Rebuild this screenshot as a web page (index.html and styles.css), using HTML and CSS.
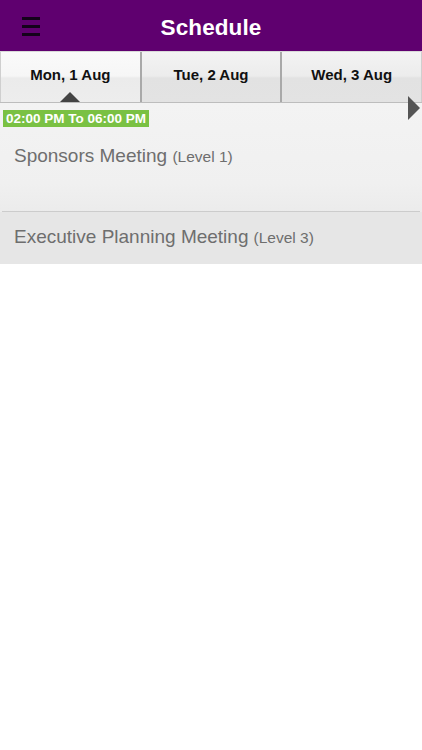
FILE: index.html
```html
<!DOCTYPE html>
<html>
<head>
<meta charset="utf-8">
<link rel="stylesheet" href="styles.css">
</head>
<body>
<header class="topbar">
  <div class="menu"><span></span><span></span><span></span></div>
  <h1 class="title">Schedule</h1>
</header>
<nav class="tabs">
  <div class="tab active">Mon, 1 Aug<i class="caret"></i></div>
  <div class="tab">Tue, 2 Aug</div>
  <div class="tab">Wed, 3 Aug</div>
</nav>
<section class="slot">
  <div class="slot-head">
    <span class="time">02:00 PM To 06:00 PM</span>
    <i class="next"></i>
  </div>
  <div class="item first">Sponsors Meeting <small>(Level 1)</small></div>
  <div class="item second">Executive Planning Meeting <small>(Level 3)</small></div>
</section>
</body>
</html>
```
FILE: styles.css
```css
html, body { margin: 0; padding: 0; background: #fff; }
body { font-family: "Liberation Sans", Arial, sans-serif; width: 422px; }
.topbar {
  height: 51px;
  background: #5f006f;
  display: flex;
  align-items: center;
  justify-content: center;
  position: relative;
  box-sizing: border-box;
  padding-top: 5px;
}
.menu {
  position: absolute;
  left: 22px;
  top: 17px;
  width: 18px;
  display: flex;
  flex-direction: column;
  gap: 5px;
}
.menu span { display: block; height: 3px; background: #14021a; }
.title {
  margin: 0;
  color: #fff;
  font-size: 22.5px;
  font-weight: bold;
  letter-spacing: 0.1px;
}
.tabs {
  display: flex;
  border-top: 1px solid #d9d9d9;
  border-bottom: 1px solid #bdbdbd;
  box-sizing: border-box;
  height: 52px;
}
.tab {
  flex: 1;
  display: flex;
  align-items: center;
  justify-content: center;
  font-size: 15px;
  font-weight: bold;
  color: #111;
  background: linear-gradient(#f3f3f3 0%, #ececec 48%, #e2e2e2 52%, #e3e3e3 100%);
  border-left: 2px solid #a9a9a9;
  position: relative;
  padding-bottom: 6px;
}
.tab:first-child { border-left: 1px solid #cfcfcf; }
.tab:last-child { border-right: 1px solid #cfcfcf; }
.tab.active {
  background: linear-gradient(#fafafa 0%, #f6f6f6 48%, #ebebeb 52%, #ededed 100%);
}
.caret {
  position: absolute;
  left: 50%;
  bottom: 0;
  margin-left: -10px;
  width: 0; height: 0;
  border-left: 10px solid transparent;
  border-right: 10px solid transparent;
  border-bottom: 10px solid #444;
}
.slot {
  background: linear-gradient(#f3f3f3 0%, #f0f0f0 50%, #e3e3e3 100%);
}
.slot-head {
  position: relative;
  padding: 6px 0 0 3px;
  height: 20px;
}
.time {
  display: inline-block;
  background: #7ac143;
  color: #fff;
  font-size: 13.5px;
  font-weight: bold;
  padding: 1px 3px 1px 3px;
  line-height: 15px;
}
.next {
  position: absolute;
  right: 2px;
  top: -7px;
  width: 0; height: 0;
  border-top: 12px solid transparent;
  border-bottom: 12px solid transparent;
  border-left: 12px solid #555;
}
.item {
  color: #6e6e6e;
  font-size: 19px;
  padding-left: 14px;
}
.item small { font-size: 15.5px; }
.item.first {
  padding-top: 16px;
  box-sizing: border-box;
  height: 83px;
  border-bottom: 1px solid #cccccc;
  margin: 0 2px;
  padding-left: 12px;
}
.item.second {
  background: #e6e6e6;
  height: 52px;
  display: flex;
  align-items: center;
  gap: 5px;
  padding-bottom: 2px;
  box-sizing: border-box;
}
.item.second small { position: relative; top: 1px; }
```
